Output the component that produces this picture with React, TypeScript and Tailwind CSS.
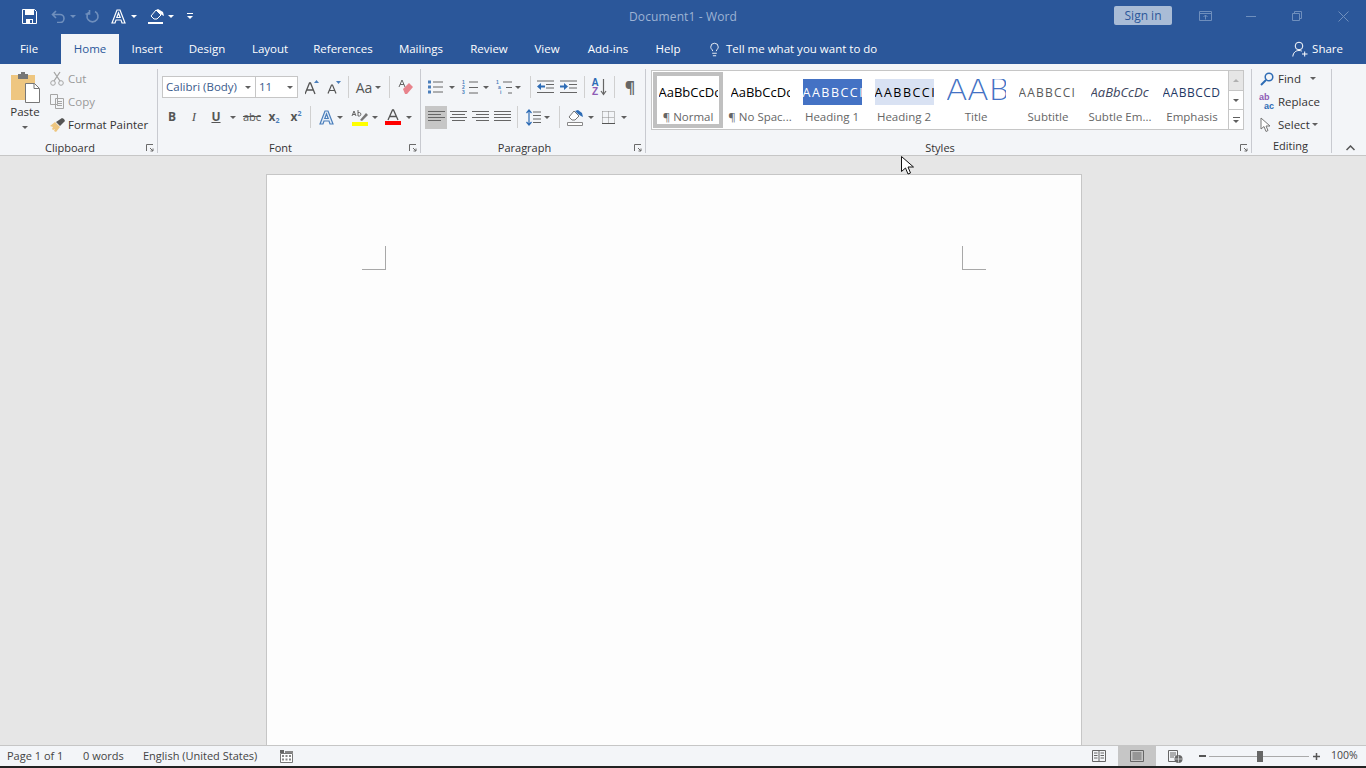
import type { ReactNode } from "react";
import { Lightbulb } from "lucide-react";

function Caret({ color = "#5f5f5f", className = "" }: { color?: string; className?: string }) {
  return (
    <svg width="6" height="3" viewBox="0 0 6 3" className={className}>
      <path d="M0 0h6L3 3z" fill={color} />
    </svg>
  );
}

function Cell({ w, children }: { w: string; children?: ReactNode }) {
  return <div className={`flex h-full shrink-0 items-center justify-center ${w}`}>{children}</div>;
}

function Sep() {
  return <div className="h-[22px] w-px shrink-0 bg-[#d0d0d0]" />;
}

function Launcher() {
  return (
    <svg width="8" height="8" viewBox="0 0 8 8" className="absolute bottom-[1px] right-[3px]">
      <path d="M.5 7V.5H7M4 4l3 3M7 4.5V7H4.5" fill="none" stroke="#6a6a6a" />
    </svg>
  );
}

function Group({ w, label, launcher = true, children }: { w: string; label: string; launcher?: boolean; children: ReactNode }) {
  return (
    <div className={`relative mt-[5px] h-[84px] shrink-0 border-r border-[#c8cad0] ${w}`}>
      <div className="h-[71px]">{children}</div>
      <div className={`h-[16px] text-center text-[11px] leading-[16px] text-[#333] ${launcher ? "pr-[17px]" : "pr-[2px]"}`}>{label}</div>
      {launcher && <Launcher />}
    </div>
  );
}

function Lines({ rows, align = "left" }: { rows: number; align?: "left" | "center" | "right" | "full" }) {
  const ys = Array.from({ length: rows }, (_, i) => 1.5 + i * 3);
  return (
    <svg width="17" height="14" viewBox="0 0 17 14">
      {ys.map((y, i) => {
        const short = i % 2 === 1 && align !== "full" ? 4 : 0;
        const x = align === "right" ? short : align === "center" ? short / 2 : 0;
        return <path key={y} d={`M${x} ${y}h${17 - short}`} stroke="#666" strokeWidth="1" />;
      })}
    </svg>
  );
}

// small numbered list icon: real digits next to drawn lines
function ListNumbers({ marks, indent }: { marks: string[]; indent?: boolean }) {
  return (
    <div className="flex h-[15px] items-start">
      <div className="flex w-[7px] flex-col font-['Liberation_Sans',sans-serif] text-[5px] font-bold leading-[5px] text-[#4a7ebb]">
        {marks.map((m, i) => (
          <span key={m} className={indent ? (i === 0 ? "" : i === 1 ? "pl-[2px]" : "pl-[4px]") : ""}>{m}</span>
        ))}
      </div>
      <svg width="9" height="15" viewBox="0 0 9 15">
        <path d={indent ? "M0 2h9M3 7.500h6M5 13h4" : "M0 2h9M0 7.500h9M0 13h9"} stroke="#666" />
      </svg>
    </div>
  );
}

function StyleItem({ preview, label, selected }: { preview: ReactNode; label: string; selected?: boolean }) {
  return (
    <div className={`flex w-[72px] shrink-0 flex-col items-center border border-white pt-[7px] ${selected ? "shadow-[inset_0_0_0_4px_#c0c0c0]" : ""}`}>
      <div className="h-[26px] w-[59px] overflow-hidden whitespace-nowrap">{preview}</div>
      <div className="mt-[4px] text-[11.5px] leading-[16px] text-[#666]">{label}</div>
    </div>
  );
}

function Tab({ w, label }: { w: string; label: string }) {
  return <div className={`shrink-0 text-center ${w}`}>{label}</div>;
}

const tabs = [
  { w: "w-[56px]", label: "Insert" },
  { w: "w-[64px]", label: "Design" },
  { w: "w-[62px]", label: "Layout" },
  { w: "w-[84px]", label: "References" },
  { w: "w-[72px]", label: "Mailings" },
  { w: "w-[64px]", label: "Review" },
  { w: "w-[52px]", label: "View" },
  { w: "w-[70px]", label: "Add-ins" },
  { w: "w-[50px]", label: "Help" },
];

export default function App() {
  return (
    <div className="relative flex h-[768px] w-[1366px] flex-col overflow-hidden bg-[#e6e6e6] font-['Open_Sans',sans-serif] text-[#333]">
      {/* title bar */}
      <div className="flex h-[34px] shrink-0 items-center bg-[#2b579a] pb-[2px]">
        <div className="flex h-[20px] flex-1 items-center">
          <div className="ml-[17px]" />
          <Cell w="w-[24px]">
            <svg width="15" height="15" viewBox="0 0 15 15">
              <path d="M.5.5h12l2 2v12H.5z" fill="none" stroke="#fff" />
              <path d="M3 1h9v5H3zM4 10h7v4H4z" fill="#fff" />
              <path d="M8 11h2v3H8z" fill="#2b579a" />
            </svg>
          </Cell>
          <div className="w-[7px]" />
          <Cell w="w-[20px]">
            <svg width="15" height="13" viewBox="0 0 15 13">
              <path d="M5 1L1.500 4.500 5 8M2 4.500h7a4 4 0 0 1 0 8H6" fill="none" stroke="#6f8fbd" strokeWidth="1.600" />
            </svg>
          </Cell>
          <Cell w="w-[10px]"><Caret color="#6f8fbd" /></Cell>
          <div className="w-[4px]" />
          <Cell w="w-[20px]">
            <svg width="15" height="15" viewBox="0 0 15 15">
              <path d="M5 2.500a5.500 5.500 0 1 0 5 0M4.500 1v4h-4" fill="none" stroke="#6f8fbd" strokeWidth="1.600" />
            </svg>
          </Cell>
          <div className="w-[6px]" />
          <Cell w="w-[20px]">
            <svg width="15" height="15" viewBox="0 0 15 15">
              <path d="M1 14L6 1h3l5 13h-3l-1-3H5l-1 3zM5.800 8.500h3.400L7.500 4z" fill="#2b579a" stroke="#fff" strokeWidth="1.200" />
            </svg>
          </Cell>
          <div className="w-[1px]" />
          <Cell w="w-[10px]"><Caret color="#fff" /></Cell>
          <div className="w-[7px]" />
          <Cell w="w-[20px]">
            <svg width="17" height="17" viewBox="0 0 17 17">
              <path d="M3 8l5-6 5 5-4 4H6z" fill="#2b579a" stroke="#fff" />
              <path d="M8 2l2-1 5 3 1 4-2-1-3-2z" fill="#fff" />
              <path d="M0 14h15v2H0z" fill="#fff" />
            </svg>
          </Cell>
          <Cell w="w-[10px]"><Caret color="#fff" /></Cell>
          <div className="w-[8px]" />
          <Cell w="w-[12px]">
            <svg width="6" height="6" viewBox="0 0 6 6">
              <path d="M0 .5h6" stroke="#fff" />
              <path d="M0 3h6L3 6z" fill="#fff" />
            </svg>
          </Cell>
        </div>
        <div className="mt-px text-[12px] tracking-[.12px] text-[#9db3d4]">Document1 - Word</div>
        <div className="flex h-full flex-1 items-center justify-end">
          <div className="mb-[1px] mr-[10px] flex h-[19px] w-[58px] items-center justify-center rounded-[2px] bg-[#a9bcd6] text-[12px] text-[#2b579a]">Sign in</div>
          <Cell w="w-[46px]">
            <svg width="13" height="10" viewBox="0 0 13 10">
              <path d="M.5.500h12v9H.5zM.5 2.500h12M6.500 8.500V4M4.500 6l2-2 2 2" fill="none" stroke="#6f8fbd" />
            </svg>
          </Cell>
          <Cell w="w-[46px]"><div className="h-px w-[10px] bg-[#6f8fbd]" /></Cell>
          <Cell w="w-[46px]">
            <svg width="10" height="10" viewBox="0 0 10 10">
              <path d="M2.500 2.500V.500h7v7h-2M.5 2.500h7v7h-7z" fill="none" stroke="#6f8fbd" />
            </svg>
          </Cell>
          <Cell w="w-[46px]">
            <svg width="11" height="11" viewBox="0 0 11 11">
              <path d="M.5.500l10 10M10.500.500l-10 10" stroke="#6f8fbd" />
            </svg>
          </Cell>
        </div>
      </div>

      {/* tabs */}
      <div className="flex h-[30px] shrink-0 items-stretch bg-[#2b579a] text-[11.5px] leading-[30px] text-white">
        <Tab w="w-[58px]" label="File" />
        <div className="ml-[3px] w-[58px] shrink-0 bg-[#f3f5f8] text-center text-[#2b579a]">Home</div>
        {tabs.map((t) => (
          <Tab key={t.label} w={t.w} label={t.label} />
        ))}
        <div className="ml-[14px] flex items-center">
          <Lightbulb size={15} strokeWidth={1.4} color="#fff" />
          <span className="ml-[4px]">Tell me what you want to do</span>
        </div>
        <div className="ml-auto mr-[23px] flex items-center">
          <svg width="16" height="16" viewBox="0 0 16 16" className="mr-[4px]">
            <circle cx="7" cy="5" r="3.800" fill="none" stroke="#fff" />
            <path d="M.8 15.500c.4-4 3-6 6.200-6 1 0 2 .2 2.800.6M10 13h5.500M12.700 10.500v5" fill="none" stroke="#fff" />
          </svg>
          Share
        </div>
      </div>

      {/* ribbon */}
      <div className="flex h-[92px] shrink-0 border-b border-[#c6c6c6] bg-[#f3f5f8]">
        <Group w="w-[158px]" label="Clipboard">
          <div className="flex h-full">
            <div className="flex w-[50px] shrink-0 flex-col items-center pt-[3px]">
              <svg width="30" height="31" viewBox="0 0 30 31">
                <path d="M1 3h24v25H1z" fill="#eec680" />
                <path d="M8 2h10v5H8z" fill="#777" />
                <path d="M11 0h4v3h-4z" fill="#777" />
                <path d="M15.500 11.500h9l5 5v14h-14z" fill="#fff" stroke="#777" />
                <path d="M24 11.500v5h5" fill="none" stroke="#777" />
              </svg>
              <div className="mt-[1px] text-[11.5px] leading-[16px] text-[#333]">Paste</div>
              <Caret className="mt-[6px]" />
            </div>
            <div className="-mt-[2px] flex flex-col text-[11.5px] leading-[23px]">
              <div className="flex h-[23px] items-center text-[#9a9a9a]">
                <svg width="14" height="15" viewBox="0 0 14 15" className="mr-[4px]">
                  <circle cx="3" cy="12" r="2.300" fill="none" stroke="#a5a5a5" />
                  <circle cx="11" cy="12" r="2.300" fill="none" stroke="#a5a5a5" />
                  <path d="M4 10L10 1M10 10L4 1" stroke="#a5a5a5" strokeWidth="1.300" />
                </svg>
                Cut
              </div>
              <div className="flex h-[23px] items-center text-[#9a9a9a]">
                <svg width="14" height="15" viewBox="0 0 14 15" className="mr-[4px]">
                  <path d="M.5.500h7v10h-7zM5.500 4.500h8v10h-8zM7 7.500h5M7 9.500h5M7 11.500h5" fill="#f3f5f8" stroke="#a5a5a5" />
                </svg>
                Copy
              </div>
              <div className="flex h-[23px] items-center whitespace-nowrap text-[#333]">
                <svg width="16" height="14" viewBox="0 0 16 14" className="mr-[2px]">
                  <path d="M0 8l5-4 5 5-4 5-2-1 1-2-2 1-1-1 1-2z" fill="#eec680" />
                  <path d="M6 4l4 4 5-5-1-2-2-1z" fill="#555" />
                </svg>
                Format Painter
              </div>
            </div>
          </div>
        </Group>

        <Group w="w-[263px]" label="Font">
          <div className="pl-[4px] pt-[7px]">
            <div className="flex h-[22px] items-center">
              <div className="flex h-[22px] w-[94px] shrink-0 items-center justify-between border border-[#c6c6c6] bg-white pl-[3px] pr-[4px] text-[11.5px] text-[#3a5a8c]">
                Calibri (Body)
                <Caret />
              </div>
              <div className="-ml-px flex h-[22px] w-[43px] shrink-0 items-center justify-between border border-[#c6c6c6] bg-white pl-[3px] pr-[4px] text-[11.5px] text-[#3a5a8c]">
                11
                <Caret />
              </div>
              <div className="w-[6px]" />
              <Cell w="w-[16px]">
                <svg width="14" height="15" viewBox="0 0 14 15">
                  <path d="M0 14L4.500 3h1L10 14M2 10h6" fill="none" stroke="#555" strokeWidth="1.300" />
                  <path d="M9 3l2.500-3L14 3z" fill="#4a7ebb" />
                </svg>
              </Cell>
              <div className="w-[6px]" />
              <Cell w="w-[16px]">
                <svg width="14" height="13" viewBox="0 0 14 13">
                  <path d="M1 12.500L4.500 4h1L9 12.500M2.500 9.500h5" fill="none" stroke="#555" strokeWidth="1.200" />
                  <path d="M9 0h5l-2.500 3z" fill="#4a7ebb" />
                </svg>
              </Cell>
              <div className="w-[6px]" />
              <Sep />
              <div className="w-[6px]" />
              <Cell w="w-[18px]"><span className="text-[14px] text-[#555]">Aa</span></Cell>
              <Cell w="w-[10px]"><Caret /></Cell>
              <div className="w-[6px]" />
              <Sep />
              <div className="w-[8px]" />
              <Cell w="w-[16px]">
                <svg width="16" height="16" viewBox="0 0 16 16">
                  <path d="M1 8L4 1M7 8L4 1M2 5.500h4" fill="none" stroke="#666" />
                  <path d="M5 10l6-6 4 4-6 7H7z" fill="#e8838c" />
                </svg>
              </Cell>
            </div>
            <div className="mt-[8px] flex h-[22px] items-center">
              <Cell w="w-[20px]"><span className="text-[12px] font-bold text-[#555]">B</span></Cell>
              <div className="w-[2px]" />
              <Cell w="w-[20px]"><span className="font-['Liberation_Serif',serif] text-[13px] italic text-[#555]">I</span></Cell>
              <div className="w-[2px]" />
              <Cell w="w-[20px]"><span className="text-[12px] font-bold text-[#555] underline">U</span></Cell>
              <Cell w="w-[14px]"><Caret /></Cell>
              <div className="w-[1px]" />
              <Cell w="w-[22px]"><span className="text-[11px] text-[#555] line-through">abc</span></Cell>
              <Cell w="w-[22px]">
                <span className="text-[12px] font-bold text-[#555]">x</span>
                <span className="mt-[7px] text-[7px] font-bold leading-none text-[#4a7ebb]">2</span>
              </Cell>
              <Cell w="w-[22px]">
                <span className="text-[12px] font-bold text-[#555]">x</span>
                <span className="mb-[7px] text-[7px] font-bold leading-none text-[#4a7ebb]">2</span>
              </Cell>
              <div className="w-[3px]" />
              <Sep />
              <div className="w-[5px]" />
              <Cell w="w-[20px]">
                <svg width="15" height="15" viewBox="0 0 15 15">
                  <path d="M1 14L6 1h3l5 13h-3l-1-3H5l-1 3zM5.800 8.500h3.400L7.500 4z" fill="#e3ecf7" stroke="#4a7ebb" strokeWidth="1.200" />
                </svg>
              </Cell>
              <Cell w="w-[8px]"><Caret /></Cell>
              <div className="w-[5px]" />
              <Cell w="w-[20px]">
                <svg width="17" height="17" viewBox="0 0 17 17">
                  <path d="M1 7l2-5 2 5M2 5.500h2M7 1v6h1.500a1.800 1.800 0 0 0 0-3.500H7" fill="none" stroke="#666" />
                  <path d="M9 11l6-7 2 2-6 6z" fill="#777" />
                  <path d="M1 13h16v4H1z" fill="#ffff00" />
                </svg>
              </Cell>
              <div className="w-[2px]" />
              <Cell w="w-[8px]"><Caret /></Cell>
              <div className="w-[4px]" />
              <Cell w="w-[20px]">
                <svg width="16" height="16" viewBox="0 0 16 16">
                  <path d="M3 11L7.500 1h1L13 11M5 7.500h6" fill="none" stroke="#555" strokeWidth="1.300" />
                  <path d="M0 12h16v4H0z" fill="#ff0000" />
                </svg>
              </Cell>
              <div className="w-[2px]" />
              <Cell w="w-[8px]"><Caret /></Cell>
            </div>
          </div>
        </Group>

        <Group w="w-[225px]" label="Paragraph">
          <div className="pl-[3px] pt-[7px]">
            <div className="flex h-[22px] items-center">
              <div className="w-[1px]" />
              <Cell w="w-[20px]">
                <svg width="15" height="14" viewBox="0 0 15 14">
                  <path d="M5 2h10M5 7h10M5 12h10" stroke="#666" />
                  <path d="M0 .5h3v3H0zM0 5.500h3v3H0zM0 10.500h3v3H0z" fill="#4a7ebb" />
                </svg>
              </Cell>
              <div className="w-[2px]" />
              <Cell w="w-[10px]"><Caret /></Cell>
              <div className="w-[3px]" />
              <Cell w="w-[20px]"><ListNumbers marks={["1", "2", "3"]} /></Cell>
              <div className="w-[1px]" />
              <Cell w="w-[10px]"><Caret /></Cell>
              <div className="w-[4px]" />
              <Cell w="w-[18px]"><ListNumbers marks={["1", "a", "i"]} indent /></Cell>
              <div className="w-[1px]" />
              <Cell w="w-[8px]"><Caret /></Cell>
              <div className="w-[8px]" />
              <Sep />
              <div className="w-[4px]" />
              <Cell w="w-[20px]">
                <svg width="17" height="14" viewBox="0 0 17 14">
                  <path d="M0 1h17M9 4.500h8M9 8h8M0 12.500h17" stroke="#666" />
                  <path d="M0 6.500l4-3.500v2.500h4v2H4V10z" fill="#2e6cb5" />
                </svg>
              </Cell>
              <div className="w-[3px]" />
              <Cell w="w-[20px]">
                <svg width="17" height="14" viewBox="0 0 17 14">
                  <path d="M0 1h17M9 4.500h8M9 8h8M0 12.500h17" stroke="#666" />
                  <path d="M8 6.500L4 3v2.500H0v2h4V10z" fill="#2e6cb5" />
                </svg>
              </Cell>
              <div className="w-[6px]" />
              <Sep />
              <div className="w-[4px]" />
              <Cell w="w-[20px]">
                <div className="flex items-center">
                  <div className="flex flex-col text-center font-['Liberation_Sans',sans-serif] text-[10px] font-bold leading-[9px]">
                    <span className="text-[#2e6cb5]">A</span>
                    <span className="text-[#8e5bb5]">Z</span>
                  </div>
                  <svg width="7" height="18" viewBox="0 0 7 18" className="ml-[1px]">
                    <path d="M3.500 1v15M1 13l2.500 3.500L6 13" fill="none" stroke="#666" strokeWidth="1.200" />
                  </svg>
                </div>
              </Cell>
              <div className="w-[5px]" />
              <Sep />
              <div className="w-[5px]" />
              <Cell w="w-[20px]"><span className="text-[16px] font-bold text-[#666]">¶</span></Cell>
            </div>
            <div className="mt-[8px] flex h-[22px] items-center">
              <div className="w-px" />
              <div className="flex h-[23px] w-[22px] shrink-0 items-center justify-center bg-[#c6c6c6]"><Lines rows={4} /></div>
              <Cell w="w-[22px]"><Lines rows={4} align="center" /></Cell>
              <Cell w="w-[22px]"><Lines rows={4} align="right" /></Cell>
              <Cell w="w-[22px]"><Lines rows={4} align="full" /></Cell>
              <div className="w-[4px]" />
              <Sep />
              <div className="w-[7px]" />
              <Cell w="w-[16px]">
                <svg width="15" height="17" viewBox="0 0 15 17">
                  <path d="M3 1v15M.5 4L3 1l2.500 3M.5 13L3 16l2.500-3" fill="none" stroke="#2e6cb5" strokeWidth="1.200" />
                  <path d="M7 3h8M7 6.500h8M7 10h8M7 13.500h8" stroke="#666" />
                </svg>
              </Cell>
              <div className="w-[1px]" />
              <Cell w="w-[10px]"><Caret /></Cell>
              <div className="w-[7px]" />
              <Sep />
              <div className="w-[5px]" />
              <Cell w="w-[20px]">
                <svg width="17" height="17" viewBox="0 0 17 17">
                  <path d="M2 8l5-6 5 5-4 4H5z" fill="#fff" stroke="#777" />
                  <path d="M8 2l3-1 4 3 1 4-2-1-3-2z" fill="#2e6cb5" />
                  <path d="M.5 13.500h15v3H.5z" fill="#fff" stroke="#888" />
                </svg>
              </Cell>
              <div className="w-[1px]" />
              <Cell w="w-[10px]"><Caret /></Cell>
              <div className="w-[2px]" />
              <Cell w="w-[20px]">
                <svg width="13" height="13" viewBox="0 0 13 13">
                  <path d="M.5.500h12M.5 6.500h12M.5.500v12M6.500.500v12M12.500.500v12" fill="none" stroke="#8a8a8a" strokeDasharray="1 1" />
                  <path d="M0 12.500h13" stroke="#555" />
                </svg>
              </Cell>
              <div className="w-[1px]" />
              <Cell w="w-[10px]"><Caret /></Cell>
            </div>
          </div>
        </Group>

        <Group w="w-[606px]" label="Styles">
          <div className="pl-[5px] pt-[1px]">
            <div className="flex h-[60px] w-[593px] border border-[#c6c6c6] bg-white">
              <StyleItem selected label="¶ Normal" preview={<span className="text-[13px] leading-[26px] text-black">AaBbCcDc</span>} />
              <StyleItem label="¶ No Spac..." preview={<span className="text-[13px] leading-[26px] text-black">AaBbCcDc</span>} />
              <StyleItem label="Heading 1" preview={<div className="h-full bg-[#4472c4] text-[12.500px] leading-[27px] tracking-[1.500px] text-white">AABBCCI</div>} />
              <StyleItem label="Heading 2" preview={<div className="h-full bg-[#d9e2f3] text-[12.500px] leading-[27px] tracking-[1.500px] text-black">AABBCCI</div>} />
              <StyleItem label="Title" preview={<span className="-mt-[9px] block font-['Lato',sans-serif] text-[31px] font-light leading-[36px] tracking-[1px] text-[#4472c4]">AAB</span>} />
              <StyleItem label="Subtitle" preview={<span className="text-[12px] leading-[26px] tracking-[1.200px] text-[#5a5a5a]">AABBCCI</span>} />
              <StyleItem label="Subtle Em..." preview={<span className="text-[13px] italic leading-[26px] text-[#3d4660]">AaBbCcDc</span>} />
              <StyleItem label="Emphasis" preview={<span className="text-[12px] leading-[26px] tracking-[.5px] text-[#1f3864]">AABBCCD</span>} />
              <div className="flex w-[15px] shrink-0 flex-col border-l border-[#c6c6c6]">
                <div className="flex h-[20px] items-center justify-center border-b border-[#c6c6c6] bg-[#e6e6e6]"><Caret color="#b0b0b0" className="rotate-180" /></div>
                <div className="flex h-[19px] items-center justify-center border-b border-[#c6c6c6]"><Caret /></div>
                <div className="flex flex-1 flex-col items-center justify-center gap-[2px]">
                  <div className="h-px w-[7px] bg-[#5f5f5f]" />
                  <Caret />
                </div>
              </div>
            </div>
          </div>
        </Group>

        <Group w="w-[80px]" label="Editing" launcher={false}>
          <div className="-mt-[2px] flex flex-col text-[11.5px]">
            <div className="flex h-[23px] items-center">
              <Cell w="w-[26px]">
                <svg width="14" height="14" viewBox="0 0 14 14" className="ml-[3px]">
                  <circle cx="9" cy="5" r="3.800" fill="none" stroke="#2e6cb5" strokeWidth="1.500" />
                  <path d="M6 8l-5 5" stroke="#2e6cb5" strokeWidth="2" />
                </svg>
              </Cell>
              Find
              <Caret className="ml-[9px]" />
            </div>
            <div className="flex h-[23px] items-center">
              <Cell w="w-[26px]">
                <div className="ml-[3px] flex flex-col font-['Liberation_Sans',sans-serif] text-[9px] font-bold leading-[9px]">
                  <span className="text-[#8e5bb5]">ab</span>
                  <span className="pl-[5px] text-[#2e6cb5]">ac</span>
                </div>
              </Cell>
              Replace
            </div>
            <div className="flex h-[23px] items-center">
              <Cell w="w-[26px]">
                <svg width="11" height="15" viewBox="0 0 11 15">
                  <path d="M1 1v11l3-2.500 2 5 2-1-2-4.500h4z" fill="#fff" stroke="#777" />
                </svg>
              </Cell>
              Select
              <Caret className="ml-[2px]" />
            </div>
          </div>
        </Group>

        <div className="flex flex-1 items-end justify-center pb-[4px] pl-[3px]">
          <svg width="9" height="6" viewBox="0 0 9 6">
            <path d="M.5 5l4-4 4 4" fill="none" stroke="#555" strokeWidth="1.500" />
          </svg>
        </div>
      </div>

      {/* document area */}
      <div className="min-h-0 flex-1 overflow-hidden pt-[18px]">
        <div className="ml-[266px] flex h-[800px] w-[816px] justify-between border border-[#c6c6c6] bg-[#fdfdfd] px-[95px] pt-[71px]">
          <div className="h-[24px] w-[24px] border-b border-r border-[#a8a8a8]" />
          <div className="h-[24px] w-[24px] border-b border-l border-[#a8a8a8]" />
        </div>
      </div>

      {/* status bar */}
      <div className="flex h-[21px] shrink-0 items-center border-t border-[#c6c6c6] bg-[#f3f5f8] text-[11px] text-[#444]">
        <span className="ml-[7px] w-[76px] shrink-0 whitespace-nowrap">Page 1 of 1</span>
        <span className="w-[60px] shrink-0 whitespace-nowrap">0 words</span>
        <span className="w-[137px] shrink-0 whitespace-nowrap">English (United States)</span>
        <svg width="13" height="13" viewBox="0 0 13 13">
          <path d="M0 0h4v3H0z" fill="#666" />
          <path d="M.5 3.500h12v9H.5z" fill="#fff" stroke="#777" />
          <path d="M5 1h8v2H5zM2 5h2v2H2zM5.500 5h2v2h-2zM9 5h2v2H9zM2 8.500h2v2H2zM5.500 8.500h2v2h-2zM9 8.500h2v2H9z" fill="#888" />
        </svg>
        <div className="ml-auto flex h-full items-center">
          <Cell w="w-[38px]">
            <svg width="14" height="12" viewBox="0 0 14 12">
              <path d="M.5.500h13v11H.5zM7 .500v11M2 3h3.500M2 5.500h3.500M2 8h3.500M8.500 3H12M8.500 5.500H12M8.500 8H12" fill="none" stroke="#666" />
            </svg>
          </Cell>
          <Cell w="w-[38px]">
            <div className="flex h-full w-full items-center justify-center bg-[#c6c6c6]">
              <svg width="14" height="12" viewBox="0 0 14 12">
                <path d="M.5.500h13v11H.5zM2.500 3h9M2.500 5h9M2.500 7h9M2.500 9h9" fill="none" stroke="#666" />
              </svg>
            </div>
          </Cell>
          <Cell w="w-[38px]">
            <svg width="15" height="13" viewBox="0 0 15 13">
              <path d="M.5.500h9v11h-9zM2 3h6M2 5h6M2 7h4" fill="none" stroke="#666" />
              <circle cx="10.500" cy="9" r="4" fill="#666" />
              <path d="M7 9h7M10.500 5.500v7" stroke="#f3f5f8" strokeWidth=".6" />
            </svg>
          </Cell>
          <div className="w-[5px]" />
          <div className="h-[2px] w-[7px] bg-[#555]" />
          <div className="w-[3px]" />
          <div className="flex h-[12px] w-[100px] items-center">
            <div className="h-px w-[48px] bg-[#aaa]" />
            <div className="h-[11px] w-[6px] bg-[#666]" />
            <div className="h-px w-[46px] bg-[#aaa]" />
          </div>
          <div className="w-[4px]" />
          <svg width="7" height="7" viewBox="0 0 7 7" className="mr-[11px]">
            <path d="M0 3.500h7M3.500 0v7" stroke="#555" strokeWidth="1.500" />
          </svg>
          <span className="w-[35px] whitespace-nowrap text-[10.5px]">100%</span>
        </div>
      </div>
      <div className="h-[2px] shrink-0 bg-[#222]" />

      {/* mouse pointer */}
      <svg width="13" height="20" viewBox="0 0 13 20" className="absolute left-[901px] top-[156px]">
        <path d="M.5.500v15l4-3.500 2.500 6 2.500-1-2.500-6h5.500z" fill="#fff" stroke="#111" />
      </svg>
    </div>
  );
}
